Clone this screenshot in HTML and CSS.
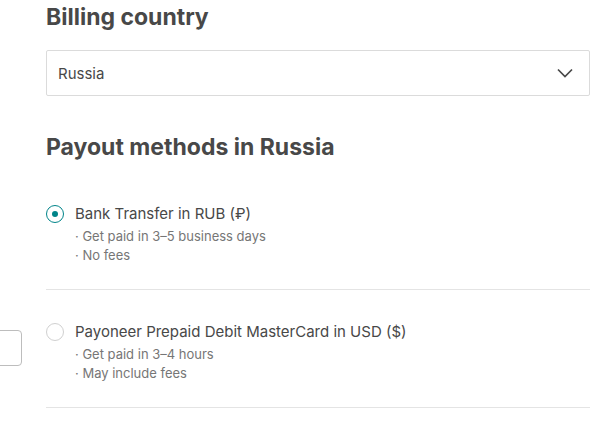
FILE: index.html
```html
<!DOCTYPE html>
<html lang="en">
<head>
<meta charset="utf-8">
<title>Payout methods</title>
<link rel="stylesheet" href="styles.css">
</head>
<body>
<div class="side-button" aria-hidden="true"></div>
<main class="page">
  <h2 class="heading">Billing country</h2>
  <div class="select">
    <span class="select-value">Russia</span>
    <svg class="chevron" width="16" height="10" viewBox="0 0 16 10" aria-hidden="true">
      <path d="M1 1.5 L8 8.5 L15 1.5" fill="none" stroke="#484848" stroke-width="1.7"/>
    </svg>
  </div>
  <h2 class="heading heading-methods">Payout methods in Russia</h2>
  <ul class="options">
    <li class="option">
      <span class="radio radio-checked"></span>
      <div class="option-body">
        <div class="option-title">Bank Transfer in RUB (₽)</div>
        <div class="option-detail">· Get paid in 3–5 business days</div>
        <div class="option-detail">· No fees</div>
      </div>
    </li>
    <li class="option">
      <span class="radio"></span>
      <div class="option-body">
        <div class="option-title">Payoneer Prepaid Debit MasterCard in USD ($)</div>
        <div class="option-detail">· Get paid in 3–4 hours</div>
        <div class="option-detail">· May include fees</div>
      </div>
    </li>
  </ul>
</main>
</body>
</html>
```
FILE: styles.css
```css
* { box-sizing: border-box; }
html, body { margin: 0; padding: 0; background: #fff; }
body {
  font-family: "Inter", "Liberation Sans", sans-serif;
  color: #484848;
  position: relative;
  overflow: hidden;
  height: 421px;
}
.page {
  padding: 0 4px 0 46px;
}
.heading {
  margin: 0;
  font-size: 23px;
  line-height: 30px;
  font-weight: 700;
  color: #484848;
  padding-top: 2px;
}
.select {
  margin-top: 18px;
  height: 46px;
  border: 1px solid #dbdbdb;
  border-radius: 2px;
  display: flex;
  align-items: center;
  justify-content: space-between;
  padding: 0 16px 0 11px;
}
.select-value {
  font-size: 15px;
  color: #484848;
}
.chevron { display: block; }
.heading-methods {
  margin-top: 34px;
}
.options {
  list-style: none;
  margin: 0;
  padding: 0;
  margin-top: 10px;
}
.option {
  display: flex;
  gap: 11px;
  padding: 31px 0 24px;
  border-bottom: 1px solid #e4e4e4;
}
.radio {
  flex: none;
  width: 18px;
  height: 18px;
  margin-top: 2px;
  border-radius: 50%;
  border: 1px solid #d0d0d0;
  display: flex;
  align-items: center;
  justify-content: center;
}
.radio-checked { border-color: #008489; border-width: 1.5px; }
.radio-checked::after {
  content: "";
  width: 6px;
  height: 6px;
  border-radius: 50%;
  background: #008489;
}
.option-title {
  font-size: 15px;
  line-height: 22px;
  color: #484848;
}
.option-detail {
  font-size: 13px;
  line-height: 19px;
  color: #767676;
}
.option-title + .option-detail { margin-top: 2px; }
.side-button {
  position: absolute;
  left: -20px;
  top: 330px;
  width: 42px;
  height: 36px;
  border: 1px solid #bdbdbd;
  border-radius: 4px;
  background: #fff;
}
```
